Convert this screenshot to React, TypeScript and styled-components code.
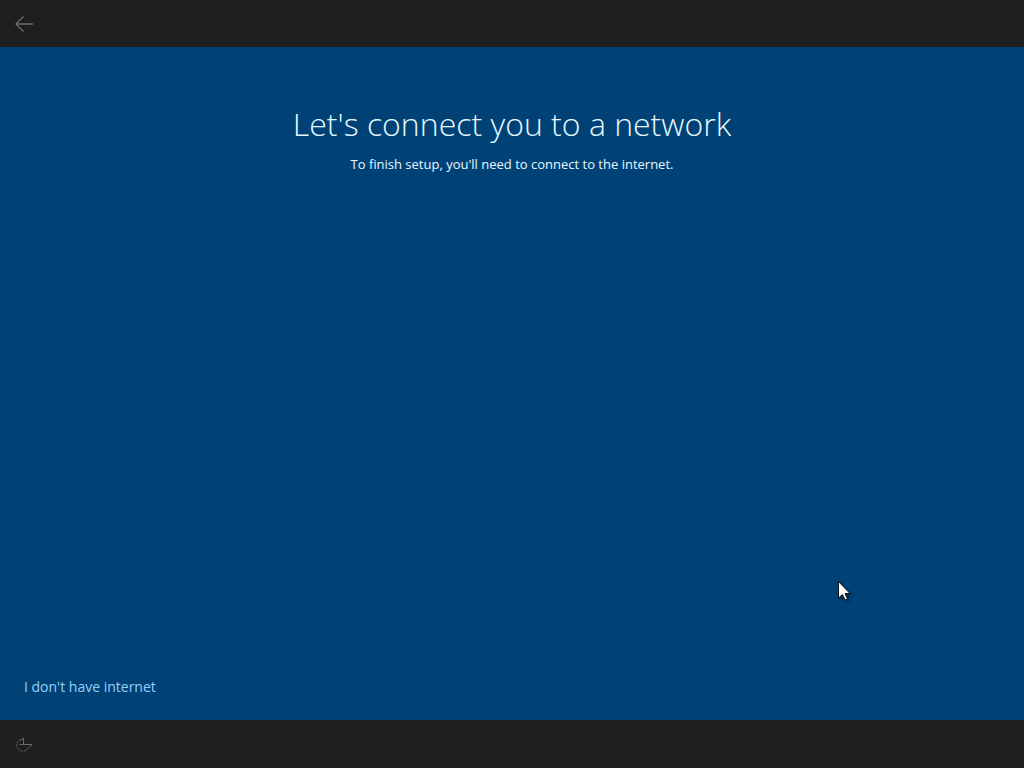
import React from "react";
import styled, { createGlobalStyle } from "styled-components";

const Global = createGlobalStyle`
  * { box-sizing: border-box; }
  body {
    margin: 0;
    font-family: "Open Sans", "Noto Sans", sans-serif;
    background: #004275;
  }
`;
const Page = styled.div`
  min-height: 100vh;
  display: flex;
  flex-direction: column;
  background: #004275;
  color: #e6f8ff;
`;
const Bar = styled.header<{ $h: number }>`
  height: ${(p) => p.$h}px;
  background: #1f1f1f;
  display: flex;
  align-items: center;
  padding: 0 12px;
`;
const IconButton = styled.button`
  display: flex;
  padding: 0;
  border: 0;
  background: none;
  color: #6b6b6b;
`;
const Main = styled.main`
  flex: 1;
  display: flex;
  flex-direction: column;
  padding: 53px 24px 21px;
`;
const Title = styled.h1`
  margin: 0;
  text-align: center;
  font-size: 32px;
  line-height: 48px;
  font-weight: 300;
`;
const Lead = styled.p`
  margin: 4px 0 auto;
  text-align: center;
  font-size: 13px;
  line-height: 24px;
`;
const Link = styled.a`
  align-self: flex-start;
  color: #94d0fa;
  font-size: 14px;
  line-height: 24px;
  text-decoration: none;
`;
const Pointer = styled.svg`
  position: absolute;
  left: 838px;
  top: 581px;
  filter: drop-shadow(2px 2px 1px rgba(0, 0, 0, 0.35));
`;

export default function App() {
  return (
    <Page>
      <Global />
      <Bar $h={47}>
        <IconButton aria-label="Back">
          <svg width="24" height="24" viewBox="0 0 24 24" fill="none" stroke="currentColor" strokeWidth="1.3">
            <path d="M21 12H4M11.500 4.500L4 12L11.500 19.500" />
          </svg>
        </IconButton>
      </Bar>
      <Main>
        <Title>Let's connect you to a network</Title>
        <Lead>To finish setup, you'll need to connect to the internet.</Lead>
        <Link href="#offline">I don't have internet</Link>
      </Main>
      <Bar as="footer" $h={48}>
        <IconButton aria-label="Ease of Access">
          <svg width="24" height="24" viewBox="0 0 24 24" fill="none" stroke="currentColor">
            <path d="M9 7.500A6 6 0 1 0 16.500 15" strokeDasharray="2 1" />
            <path d="M8.500 8.500L11.500 6V12.500H20L17 15.500M7.500 12.500H11.500" />
          </svg>
        </IconButton>
      </Bar>
      <Pointer width="12" height="20" viewBox="0 0 12 20" aria-hidden="true">
        <path d="M.5.5V17L4.500 13.500L7 19L9.500 18L7 12.500H12Z" fill="#fff" stroke="#111" />
      </Pointer>
    </Page>
  );
}
